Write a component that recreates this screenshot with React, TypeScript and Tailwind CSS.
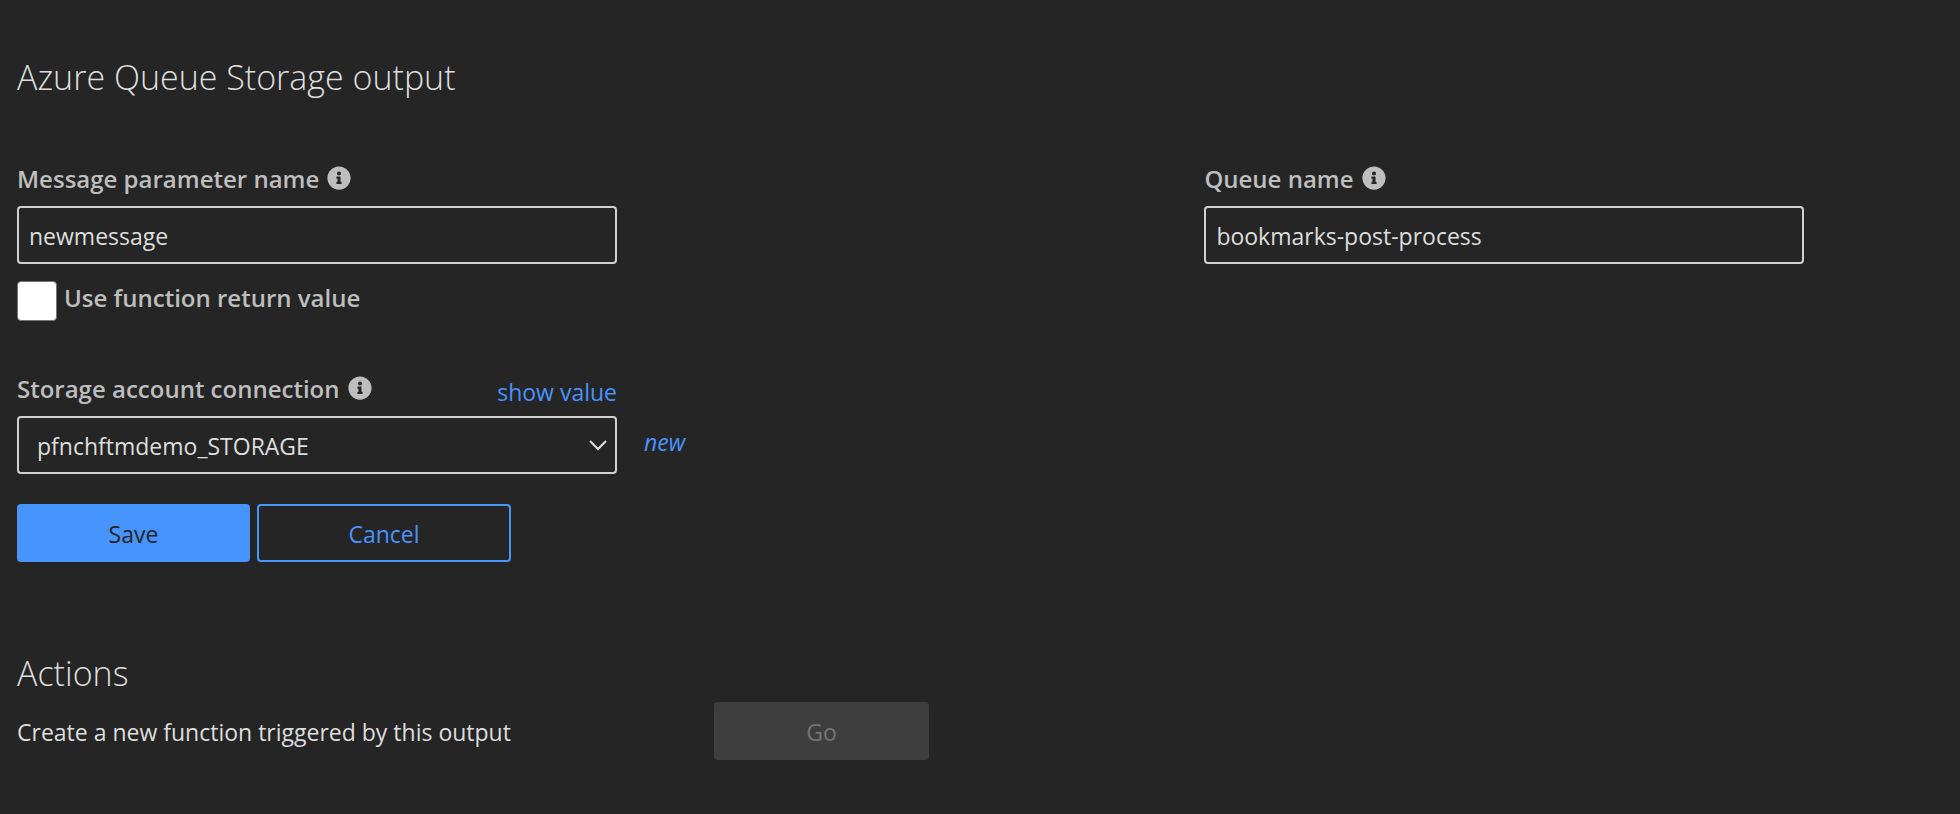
import { useState } from "react";
import type { ReactNode } from "react";
import { FaInfoCircle } from "react-icons/fa";

const fieldBox =
  "block h-[58px] w-full rounded-sm border-2 border-[#d0d0d0] bg-transparent pt-[2px] text-[23px] text-[#dedede] outline-none focus:border-[#4894fe]";

const button = "h-[58px] rounded-sm pt-[2px]";

function FieldLabel({ htmlFor, children }: { htmlFor: string; children: ReactNode }) {
  return (
    <div className="flex items-start gap-2 text-[#bebebe]">
      <label htmlFor={htmlFor} className="text-[24px] leading-8 font-semibold">
        {children}
      </label>
      <FaInfoCircle className="mt-[3px] size-6" aria-hidden="true" />
    </div>
  );
}

export default function App() {
  const [message, setMessage] = useState("newmessage");
  const [queue, setQueue] = useState("bookmarks-post-process");

  return (
    <main className="min-h-screen bg-[#252525] pt-[55px] pl-[17px] font-['Open_Sans',sans-serif] text-[23px] leading-8 text-[#dedede]">
      <form onSubmit={(e) => e.preventDefault()}>
        <h2 className="text-[34px] leading-[44px] font-light">Azure Queue Storage output</h2>

        <div className="mt-16 grid grid-cols-[11fr_7fr]">
          <div className="w-full max-w-[600px]">
            <FieldLabel htmlFor="message">Message parameter name</FieldLabel>
            <input
              id="message"
              type="text"
              value={message}
              onChange={(e) => setMessage(e.target.value)}
              className={`${fieldBox} mt-[11px] px-[10px]`}
            />
            <div className="mt-[17px] flex gap-[7px]">
              <input
                id="return-value"
                type="checkbox"
                className="size-10 shrink-0 appearance-none rounded-sm border border-[#767676] bg-white checked:bg-[#4894fe]"
              />
              <label htmlFor="return-value" className="text-[24px] leading-[34px] font-semibold text-[#bebebe]">
                Use function return value
              </label>
            </div>
          </div>

          <div className="w-full max-w-[600px]">
            <FieldLabel htmlFor="queue">Queue name</FieldLabel>
            <input
              id="queue"
              type="text"
              value={queue}
              onChange={(e) => setQueue(e.target.value)}
              className={`${fieldBox} mt-[11px] px-[10px]`}
            />
          </div>
        </div>

        <div className="mt-[52px] flex items-end gap-[27px]">
          <div className="w-full max-w-[600px]">
            <div className="flex items-start justify-between">
              <FieldLabel htmlFor="connection">Storage account connection</FieldLabel>
              <a href="#show" className="pt-[3px] text-[#4894fe]">
                show value
              </a>
            </div>
            <div className="mt-2 grid items-center">
              <select
                id="connection"
                className={`${fieldBox} col-start-1 row-start-1 appearance-none px-[18px]`}
              >
                <option>pfnchftmdemo_STORAGE</option>
              </select>
              <svg
                viewBox="0 0 18 11"
                className="pointer-events-none col-start-1 row-start-1 mr-[10px] h-[11px] w-[18px] justify-self-end"
                fill="none"
                stroke="#dedede"
                strokeWidth="2"
                aria-hidden="true"
              >
                <path d="M1 1l8 8 8-8" />
              </svg>
            </div>
          </div>
          <a href="#new" className="pb-4 text-[#4894fe] italic">
            new
          </a>
        </div>

        <div className="mt-[30px] flex gap-[7px]">
          <button type="submit" className={`${button} w-[233px] bg-[#4894fe] text-[#252525]`}>
            Save
          </button>
          <button
            type="button"
            className={`${button} w-[254px] border-2 border-[#4894fe] text-[#4894fe]`}
          >
            Cancel
          </button>
        </div>
      </form>

      <section className="mt-[89px]">
        <h2 className="text-[34px] leading-[44px] font-light">Actions</h2>
        <div className="mt-[7px] flex items-center">
          <p className="w-full max-w-[697px] pt-[2px]">Create a new function triggered by this output</p>
          <button type="button" disabled className={`${button} w-[215px] bg-[#3e3e3e] text-[#747474]`}>
            Go
          </button>
        </div>
      </section>
    </main>
  );
}
